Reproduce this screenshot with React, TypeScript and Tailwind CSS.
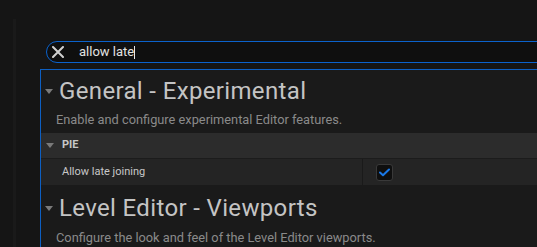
import React from 'react';

function Caret() {
  return (
    <svg width="8" height="5" viewBox="0 0 8 5" className="shrink-0">
      <path d="M0 0 L8 0 L4 5 Z" fill="#7a7a7a" />
    </svg>
  );
}

export default function App() {
  return (
    <div className="w-[537px] h-[247px] overflow-hidden bg-[#151515] flex font-['Roboto',sans-serif]">
      {/* faint side rail */}
      <div className="ml-[13px] mt-[19px] w-[3px] bg-[#1a1a1a]" />

      <div className="ml-[24px] flex-1 min-w-0 flex flex-col pt-[41px]">
        {/* Search box */}
        <div className="ml-[6px] -mr-[20px] h-[22px] rounded-l-full border border-[#0b62cc] bg-[#0f0f0f] flex items-center">
          <svg width="12" height="12" viewBox="0 0 12 12" className="ml-[5px] shrink-0">
            <path d="M1 1 L11 11 M11 1 L1 11" stroke="#d0d0d0" strokeWidth="2" strokeLinecap="round" />
          </svg>
          <span className="ml-[15px] text-[13px] leading-[16px] text-[#e2e2e2]">allow late</span>
          <span className="w-px h-[13px] bg-[#e8e8e8]" />
        </div>

        {/* Settings panel */}
        <div className="mt-[6px] -mr-[20px] flex-1 border-l border-t border-[#0d5fc2] bg-[#1a1a1a] flex flex-col">
          <div className="mt-[7px] h-[28px] pl-[4px] flex items-center gap-[6px]">
            <Caret />
            <span className="text-[24px] leading-[28px] tracking-[0.35px] text-[#c4c4c4] whitespace-nowrap">General - Experimental</span>
          </div>
          <div className="mt-[7px] pl-[15px] text-[12.8px] leading-[16px] text-[#8a8a8a] whitespace-nowrap">
            Enable and configure experimental Editor features.
          </div>

          <div className="mt-[5px] h-[26px] bg-[#2c2c2c] border-b border-[#1c1c1c] flex items-center pl-[5px] gap-[8px]">
            <Caret />
            <span className="text-[11px] font-bold text-[#c8c8c8]">PIE</span>
          </div>
          <div className="h-[26px] bg-[#242424] flex">
            <div className="w-[322px] border-r border-[#1a1a1a] flex items-center pl-[21px] text-[11px] text-[#c8c8c8]">
              Allow late joining
            </div>
            <div className="flex items-center pl-[13px]">
              <div className="w-[17px] h-[17px] rounded-[3px] bg-[#0f0f0f] border border-[#393939] flex items-center justify-center">
                <svg width="11" height="9" viewBox="0 0 11 9">
                  <path d="M1 4.5 L4 7.3 L10 1.5" fill="none" stroke="#1a78e6" strokeWidth="2" strokeLinecap="round" strokeLinejoin="round" />
                </svg>
              </div>
            </div>
          </div>

          <div className="mt-[9px] h-[28px] pl-[4px] flex items-center gap-[6px]">
            <Caret />
            <span className="text-[24px] leading-[28px] tracking-[0.35px] text-[#c4c4c4] whitespace-nowrap">Level Editor - Viewports</span>
          </div>
          <div className="mt-[8px] pl-[15px] text-[12.8px] leading-[16px] text-[#8a8a8a] whitespace-nowrap">
            Configure the look and feel of the Level Editor viewports.
          </div>
        </div>
      </div>
    </div>
  );
}
